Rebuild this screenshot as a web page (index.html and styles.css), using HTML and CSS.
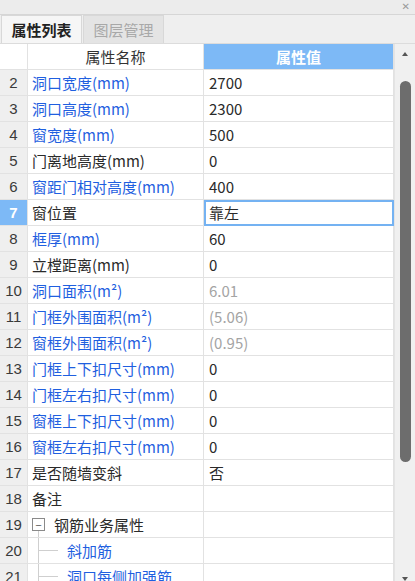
FILE: index.html
```html
<!DOCTYPE html>
<html lang="zh">
<head>
<meta charset="utf-8">
<link rel="stylesheet" href="styles.css">
</head>
<body>
<div class="panel">
  <div class="titlebar"><span class="close">✕</span></div>
  <div class="tabs">
    <div class="tab active">属性列表</div>
    <div class="tab">图层管理</div>
  </div>
  <div class="body">
    <div class="grid">
      <div class="row head">
        <div class="num"></div>
        <div class="name hname">属性名称</div>
        <div class="val hval">属性值</div>
      </div>
      <div class="row"><div class="num">2</div><div class="name blue">洞口宽度(mm)</div><div class="val">2700</div></div>
      <div class="row"><div class="num">3</div><div class="name blue">洞口高度(mm)</div><div class="val">2300</div></div>
      <div class="row"><div class="num">4</div><div class="name blue">窗宽度(mm)</div><div class="val">500</div></div>
      <div class="row"><div class="num">5</div><div class="name">门离地高度(mm)</div><div class="val">0</div></div>
      <div class="row"><div class="num">6</div><div class="name blue">窗距门相对高度(mm)</div><div class="val">400</div></div>
      <div class="row sel"><div class="num">7</div><div class="name">窗位置</div><div class="val edit">靠左</div></div>
      <div class="row"><div class="num">8</div><div class="name blue">框厚(mm)</div><div class="val">60</div></div>
      <div class="row"><div class="num">9</div><div class="name">立樘距离(mm)</div><div class="val">0</div></div>
      <div class="row"><div class="num">10</div><div class="name blue">洞口面积(m²)</div><div class="val gray">6.01</div></div>
      <div class="row"><div class="num">11</div><div class="name blue">门框外围面积(m²)</div><div class="val gray">(5.06)</div></div>
      <div class="row"><div class="num">12</div><div class="name blue">窗框外围面积(m²)</div><div class="val gray">(0.95)</div></div>
      <div class="row"><div class="num">13</div><div class="name blue">门框上下扣尺寸(mm)</div><div class="val">0</div></div>
      <div class="row"><div class="num">14</div><div class="name blue">门框左右扣尺寸(mm)</div><div class="val">0</div></div>
      <div class="row"><div class="num">15</div><div class="name blue">窗框上下扣尺寸(mm)</div><div class="val">0</div></div>
      <div class="row"><div class="num">16</div><div class="name blue">窗框左右扣尺寸(mm)</div><div class="val">0</div></div>
      <div class="row"><div class="num">17</div><div class="name">是否随墙变斜</div><div class="val">否</div></div>
      <div class="row"><div class="num">18</div><div class="name">备注</div><div class="val"></div></div>
      <div class="row"><div class="num">19</div>
        <div class="name tree">
          <div class="node"><div class="node-top"></div><div class="box">−</div><div class="node-line"></div></div>
          <span class="group">钢筋业务属性</span>
        </div>
        <div class="val"></div></div>
      <div class="row"><div class="num">20</div>
        <div class="name tree"><div class="conn"><div class="hline"></div></div><span class="blue child">斜加筋</span></div>
        <div class="val"></div></div>
      <div class="row"><div class="num">21</div>
        <div class="name tree"><div class="conn"><div class="hline"></div></div><span class="blue child">洞口每侧加强筋</span></div>
        <div class="val"></div></div>
    </div>
    <div class="scrollbar">
      <div class="arrow up"></div>
      <div class="track"><div class="thumb"></div></div>
      <div class="arrow down"></div>
    </div>
  </div>
</div>
</body>
</html>
```

FILE: styles.css
```css
* { box-sizing: border-box; }
html, body { margin: 0; padding: 0; background: #fff; }
body {
  font-family: "Noto Sans CJK SC", "Noto Sans", sans-serif;
  font-size: 15px;
  color: #2a2a2a;
}
.panel {
  width: 415px;
  height: 581px;
  overflow: hidden;
  display: flex;
  flex-direction: column;
  background: #f0f0f0;
}
.titlebar {
  height: 15px;
  flex: none;
  background: #ececec;
  border-bottom: 1px solid #d6d6d6;
  display: flex;
  justify-content: flex-end;
  align-items: center;
  padding-right: 5px;
}
.close {
  font-size: 10px;
  color: #9a9a9a;
  line-height: 10px;
  font-family: "DejaVu Sans", sans-serif;
}
.tabs {
  height: 28px;
  flex: none;
  display: flex;
  padding-left: 1px;
  background: #efefef;
}
.tab {
  width: 81px;
  height: 28px;
  display: flex;
  align-items: center;
  justify-content: center;
  font-size: 15px;
  color: #a8a8a8;
  background: #e4e4e4;
  border: 1px solid #d8d8d8;
  border-bottom: none;
  margin-right: 1px;
}
.tab.active {
  color: #222;
  font-weight: bold;
  background: #f6f6f6;
}
.body {
  flex: 1;
  display: flex;
  min-height: 0;
  background: #fff;
  border-top: 1px solid #dcdcdc;
}
.grid {
  width: 394px;
  flex: none;
  display: flex;
  flex-direction: column;
}
.row {
  display: grid;
  grid-template-columns: 28px 176px 190px;
  height: 26px;
  flex: none;
}
.row > div {
  border-bottom: 1px solid #e2e2e2;
  border-right: 1px solid #e2e2e2;
  display: flex;
  align-items: center;
  white-space: nowrap;
  overflow: hidden;
  line-height: 20px;
}
.num {
  background: #efefef;
  justify-content: center;
  color: #3a3a3a;
  font-family: "Liberation Sans", "Noto Sans", sans-serif;
  font-size: 15px;
}
.head .num { background: #fff; }
.name { padding-left: 4px; }
.val { padding-left: 5px; }
.hname { justify-content: center; padding-left: 0; color: #333; }
.hval {
  justify-content: center;
  padding-left: 0;
  background: #7db9f6;
  color: #fff;
  font-weight: bold;
}
.blue { color: #1f5fe0; }
.gray { color: #a4a4a4; }
.sel .num {
  background: #7db9f6;
  color: #fff;
  font-weight: bold;
}
.row > .val.edit {
  border: 2px solid #74b2f2;
  padding-left: 3px;
}
.tree { padding-left: 0; align-items: stretch; }
.row > .tree { align-items: stretch; }
.node {
  width: 13px;
  margin-left: 4px;
  display: flex;
  flex-direction: column;
  align-items: flex-start;
  flex: none;
}
.node-top { height: 6px; flex: none; }
.box {
  width: 13px;
  height: 13px;
  border: 1px solid #8a8a8a;
  font-size: 11px;
  line-height: 10px;
  display: flex;
  align-items: center;
  justify-content: center;
  color: #555;
  flex: none;
}
.node-line {
  flex: 1;
  margin-left: 6px;
  border-left: 1px solid #cfcfcf;
}
.group { align-self: center; margin-left: 9px; }
.conn {
  width: 24px;
  margin-left: 10px;
  border-left: 1px solid #cfcfcf;
  display: flex;
  align-items: center;
  flex: none;
}
.hline {
  width: 19px;
  height: 1px;
  background: #cfcfcf;
}
.child { align-self: center; margin-left: 5px; }
.scrollbar {
  flex: 1;
  background: #f0f0f0;
  border-left: 1px solid #e4e4e4;
  display: flex;
  flex-direction: column;
  align-items: center;
}
.arrow {
  width: 0;
  height: 0;
  border-left: 3px solid transparent;
  border-right: 3px solid transparent;
  flex: none;
}
.arrow.up { border-bottom: 4px solid #555; margin-top: 8px; }
.arrow.down { border-top: 4px solid #555; margin-top: 4px; }
.track {
  flex: 1;
  width: 100%;
  display: flex;
  justify-content: center;
  padding-top: 25px;
}
.thumb {
  width: 11px;
  height: 381px;
  background: #6d6d6d;
  border-radius: 6px;
  margin-left: 1px;
}
```
